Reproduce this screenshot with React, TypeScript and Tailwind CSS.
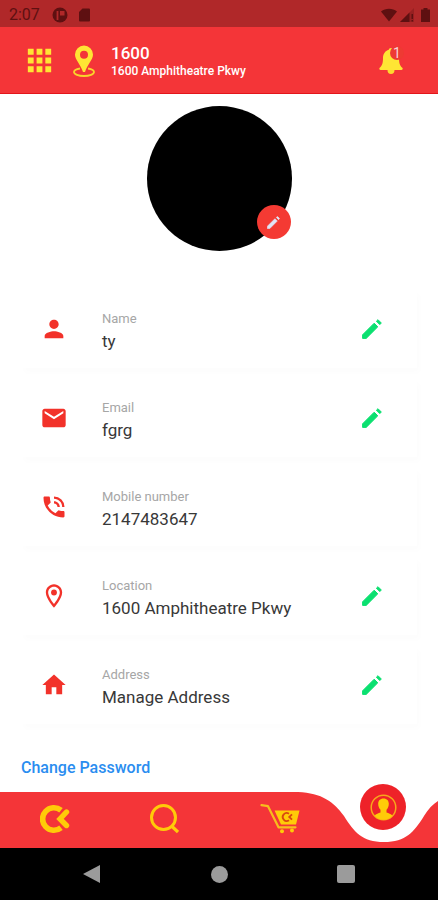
import React from 'react';
import type { IconType } from 'react-icons';
import {
  MdApps,
  MdEmail,
  MdHome,
  MdOutlineLocationOn,
  MdPerson,
  MdPhoneInTalk,
} from 'react-icons/md';

type Field = { label: string; value: string; Icon: IconType; editable: boolean };

const fields: Field[] = [
  { label: 'Name', value: 'ty', Icon: MdPerson, editable: true },
  { label: 'Email', value: 'fgrg', Icon: MdEmail, editable: true },
  { label: 'Mobile number', value: '2147483647', Icon: MdPhoneInTalk, editable: false },
  { label: 'Location', value: '1600 Amphitheatre Pkwy', Icon: MdOutlineLocationOn, editable: true },
  { label: 'Address', value: 'Manage Address', Icon: MdHome, editable: true },
];

function PencilIcon({ size }: { size: number }) {
  return (
    <svg width={size} height={size} viewBox="0 0 20 20" aria-hidden="true">
      <g fill="currentColor" stroke="currentColor" strokeWidth="1" strokeLinejoin="round">
        <path d="M.6 15.800 12.200 4.200 15.800 7.800 4.200 19.400H.6Z" />
        <path d="M14.400 2.200 16 .7 19.300 4 17.800 5.600Z" />
      </g>
    </svg>
  );
}

function StatusBar() {
  return (
    <div className="flex h-[27px] items-center bg-[#b02829] pt-[3px] pr-2 pl-[9px] text-[#5e1011]">
      <span className="w-[43px] text-base leading-5">2:07</span>
      <svg className="h-4 w-4" viewBox="0 0 16 16" aria-hidden="true">
        <circle cx="8" cy="8" r="7.5" fill="currentColor" />
        <path d="M5.500 4v9" stroke="#b02829" strokeWidth="1.800" fill="none" />
        <path d="M8 4h4.500v4.500H8Z" fill="#b02829" />
      </svg>
      <svg className="ml-[10px] h-[14px] w-[13px]" viewBox="0 0 13 14" aria-hidden="true">
        <path d="M4.500 0.500H11a1 1 0 0 1 1 1v11a1 1 0 0 1-1 1H2a1 1 0 0 1-1-1V4Z" fill="currentColor" />
      </svg>
      <div className="ml-auto flex items-center gap-[3px]">
        <svg className="h-[14px] w-4" viewBox="0 0 16 14" aria-hidden="true">
          <path d="M8 13.500 0 3.500C4.500-.3 11.500-.3 16 3.500Z" fill="currentColor" />
        </svg>
        <svg className="h-[14px] w-[14px]" viewBox="0 0 14 14" aria-hidden="true">
          <path d="M14 0v14H0Z" fill="currentColor" opacity="0.3" />
          <path d="M9.500 4.500V14H0ZM11.500 6H13v5h-1.500ZM11.500 12H13v1.500h-1.500Z" fill="currentColor" />
        </svg>
        <svg className="ml-1 h-[14px] w-[9px]" viewBox="0 0 9 14" aria-hidden="true">
          <path d="M2.500 0h4v1.500H9V14H0V1.500h2.500Z" fill="currentColor" />
        </svg>
      </div>
    </div>
  );
}

function Header() {
  return (
    <header className="flex h-[67px] items-center border-b border-[#e3161b] bg-[#f43538] px-[22px] pt-px text-white">
      <button type="button" aria-label="Menu" className="text-[#ffe534]">
        <MdApps size={35} />
      </button>
      <svg className="ml-4 h-8 w-[22px]" viewBox="0 0 22 32" aria-hidden="true">
        <path
          d="M7 23.500c-3.500.6-6 1.900-6 3.500C1 29.200 5.500 31 11 31s10-1.800 10-4c0-1.600-2.500-2.900-6-3.500"
          fill="none"
          stroke="#f9d52b"
          strokeWidth="1.800"
        />
        <path
          fillRule="evenodd"
          d="M11 .5a9 9 0 0 1 9 9c0 5.500-5.500 9.500-8 17.500h-2C7.500 19 2 15 2 9.500a9 9 0 0 1 9-9Zm0 5.200a4 4 0 1 0 0 8 4 4 0 0 0 0-8Z"
          fill="#ffe534"
        />
      </svg>
      <div className="ml-4 flex-1">
        <p className="text-[17px] leading-5 font-medium">1600</p>
        <p className="text-xs leading-4 font-medium">1600 Amphitheatre Pkwy</p>
      </div>
      <button type="button" aria-label="Notifications, 1 new" className="relative mr-[13px] h-7 w-6">
        <svg className="h-7 w-6" viewBox="0 0 24 28" aria-hidden="true">
          <path
            d="M12 1c1.300 0 2 .8 2.200 1.800C18 4 20 7.200 20 11c0 5 .8 7.500 3.300 9.800.8.800.4 2.200-.8 2.200h-21C.3 23-.1 21.600.7 20.800 3.200 18.500 4 16 4 11c0-3.800 2-7 5.800-8.200C10 1.800 10.700 1 12 1Z"
            fill="#ffe534"
          />
          <path d="M8.500 23h7a3.500 4 0 0 1-7 0Z" fill="#ffd92e" />
        </svg>
        <span className="absolute -top-px -right-px flex h-[14px] w-[14px] items-center justify-center rounded-full bg-[#ee3a33] text-sm leading-none text-[#f6d3dc]">
          1
        </span>
      </button>
    </header>
  );
}

function FieldCard({ label, value, Icon, editable }: Field) {
  return (
    <li className="flex h-[79px] items-center bg-white pr-[35px] pl-[19px] shadow-[3px_5px_6px_rgba(0,0,0,0.012)]">
      <Icon size={28} className="shrink-0 text-[#f2322a]" aria-hidden="true" />
      <dl className="ml-[34px] min-w-0 flex-1 pt-[5px]">
        <dt className="text-[13px] leading-5 text-[#a6a6a6]">{label}</dt>
        <dd className="text-[17px] leading-6 text-[#383838]">{value}</dd>
      </dl>
      {editable && (
        <button type="button" aria-label={`Edit ${label}`} className="text-[#0be070]">
          <PencilIcon size={20} />
        </button>
      )}
    </li>
  );
}

function BrandIcon() {
  return (
    <svg className="h-[30px] w-[30px]" viewBox="0 0 30 30" aria-hidden="true">
      <path d="M21 6.200A11.300 11.300 0 1 0 21 23.800" fill="none" stroke="#ffcb08" strokeWidth="5.600" />
      <path d="M27 8 19.500 15.300 27 22" fill="none" stroke="#f43538" strokeWidth="7.500" />
      <path d="M26.500 8 20 15 26.500 21.500" fill="none" stroke="#ffcb08" strokeWidth="5.400" strokeLinecap="round" />
    </svg>
  );
}

function SearchIcon() {
  return (
    <svg className="h-[30px] w-[30px]" viewBox="0 0 30 30" fill="none" stroke="#ffcb08" aria-hidden="true">
      <circle cx="14.500" cy="13.500" r="12" strokeWidth="3" />
      <path d="M22 21.500 29 28" strokeWidth="3.200" />
    </svg>
  );
}

function CartIcon() {
  return (
    <svg className="h-[30px] w-10" viewBox="0 0 40 30" aria-hidden="true">
      <path
        d="M1.500 1.200 8 2.200 18.500 23.300h17"
        fill="none"
        stroke="#f7bd1c"
        strokeWidth="2.200"
        strokeLinecap="round"
        strokeLinejoin="round"
      />
      <path d="M14.500 6.500H39.500L36 20.500H21Z" fill="#ffcb08" />
      <circle cx="22" cy="27.300" r="2" fill="#ffcb08" />
      <circle cx="32" cy="26.500" r="2" fill="#ffcb08" />
      <path d="M29 9.700A4 4 0 1 0 29 16.300M32 10.300l-2.800 2.700L32 15.700" fill="none" stroke="#d9480f" strokeWidth="1.800" />
    </svg>
  );
}

function ProfileIcon() {
  return (
    <svg className="h-[27px] w-[27px]" viewBox="0 0 27 27" aria-hidden="true">
      <circle cx="13.500" cy="13.500" r="12.300" fill="none" stroke="#f7a81b" strokeWidth="1.500" />
      <path
        d="M13.500 4.500c3.500 0 5.300 2.300 5.300 5.300 0 2.700-1 4.700-2.300 6v2.700c2 .9 4.500 1.300 6 3.200-2.300 2.600-5.400 4.100-9 4.100s-6.700-1.500-9-4.100c1.500-1.900 4-2.300 6-3.200v-2.700c-1.300-1.300-2.300-3.300-2.300-6 0-3 1.800-5.300 5.300-5.300Z"
        fill="#ffcb08"
      />
    </svg>
  );
}

function BottomNav() {
  return (
    <nav aria-label="Main" className="relative h-14">
      <div className="absolute inset-0 flex" aria-hidden="true">
        <div className="flex-1 bg-[#f43538]" />
        <svg className="h-14 w-[140px]" viewBox="0 0 140 56">
          <path
            d="M0 0C24 1 36 10 46 24C56 40 64 50 86 50C108 50 116 40 126 24C130 17 135 12 140 9V56H0Z"
            fill="#f43538"
          />
        </svg>
      </div>
      <div className="relative grid h-14 grid-cols-4">
        <button type="button" aria-label="Home" className="flex items-center justify-center pb-0.5">
          <BrandIcon />
        </button>
        <button type="button" aria-label="Search" className="flex items-center justify-center pb-0.5">
          <SearchIcon />
        </button>
        <button type="button" aria-label="Cart" className="flex items-center justify-center pb-0.5 pl-3">
          <CartIcon />
        </button>
        <button
          type="button"
          aria-label="Profile"
          className="-mt-2 flex h-[46px] w-[46px] items-center justify-center justify-self-center rounded-full bg-[#ee2229]"
        >
          <ProfileIcon />
        </button>
      </div>
    </nav>
  );
}

function SystemNav() {
  return (
    <div className="flex h-[52px] items-center justify-between bg-black px-[83px]">
      <button type="button" aria-label="Back">
        <svg className="h-[18px] w-[18px]" viewBox="0 0 18 18" aria-hidden="true">
          <path d="M17 0v18L0 9Z" fill="#9b9b9b" />
        </svg>
      </button>
      <button type="button" aria-label="Home screen" className="h-[17px] w-[17px] rounded-full bg-[#9b9b9b]" />
      <button type="button" aria-label="Recent apps" className="h-[18px] w-[18px] rounded-xs bg-[#9b9b9b]" />
    </div>
  );
}

export default function App() {
  return (
    <div className="flex min-h-screen flex-col bg-white font-[Roboto,'Liberation_Sans',sans-serif]">
      <StatusBar />
      <Header />
      <main className="flex-1 px-[21px] pt-3">
        <div className="relative mx-auto h-[145px] w-[145px] rounded-full bg-black">
          <button
            type="button"
            aria-label="Change photo"
            className="absolute right-px bottom-3 flex h-[34px] w-[34px] items-center justify-center rounded-full bg-[#f43a33] text-[#e0e4f6]"
          >
            <PencilIcon size={13} />
          </button>
        </div>
        <ul className="mt-[38px] flex flex-col gap-[10px]">
          {fields.map((field) => (
            <FieldCard key={field.label} {...field} />
          ))}
        </ul>
        <a href="#change-password" className="mt-8 inline-block text-base leading-6 font-medium text-[#2a8df0]">
          Change Password
        </a>
      </main>
      <BottomNav />
      <SystemNav />
    </div>
  );
}
